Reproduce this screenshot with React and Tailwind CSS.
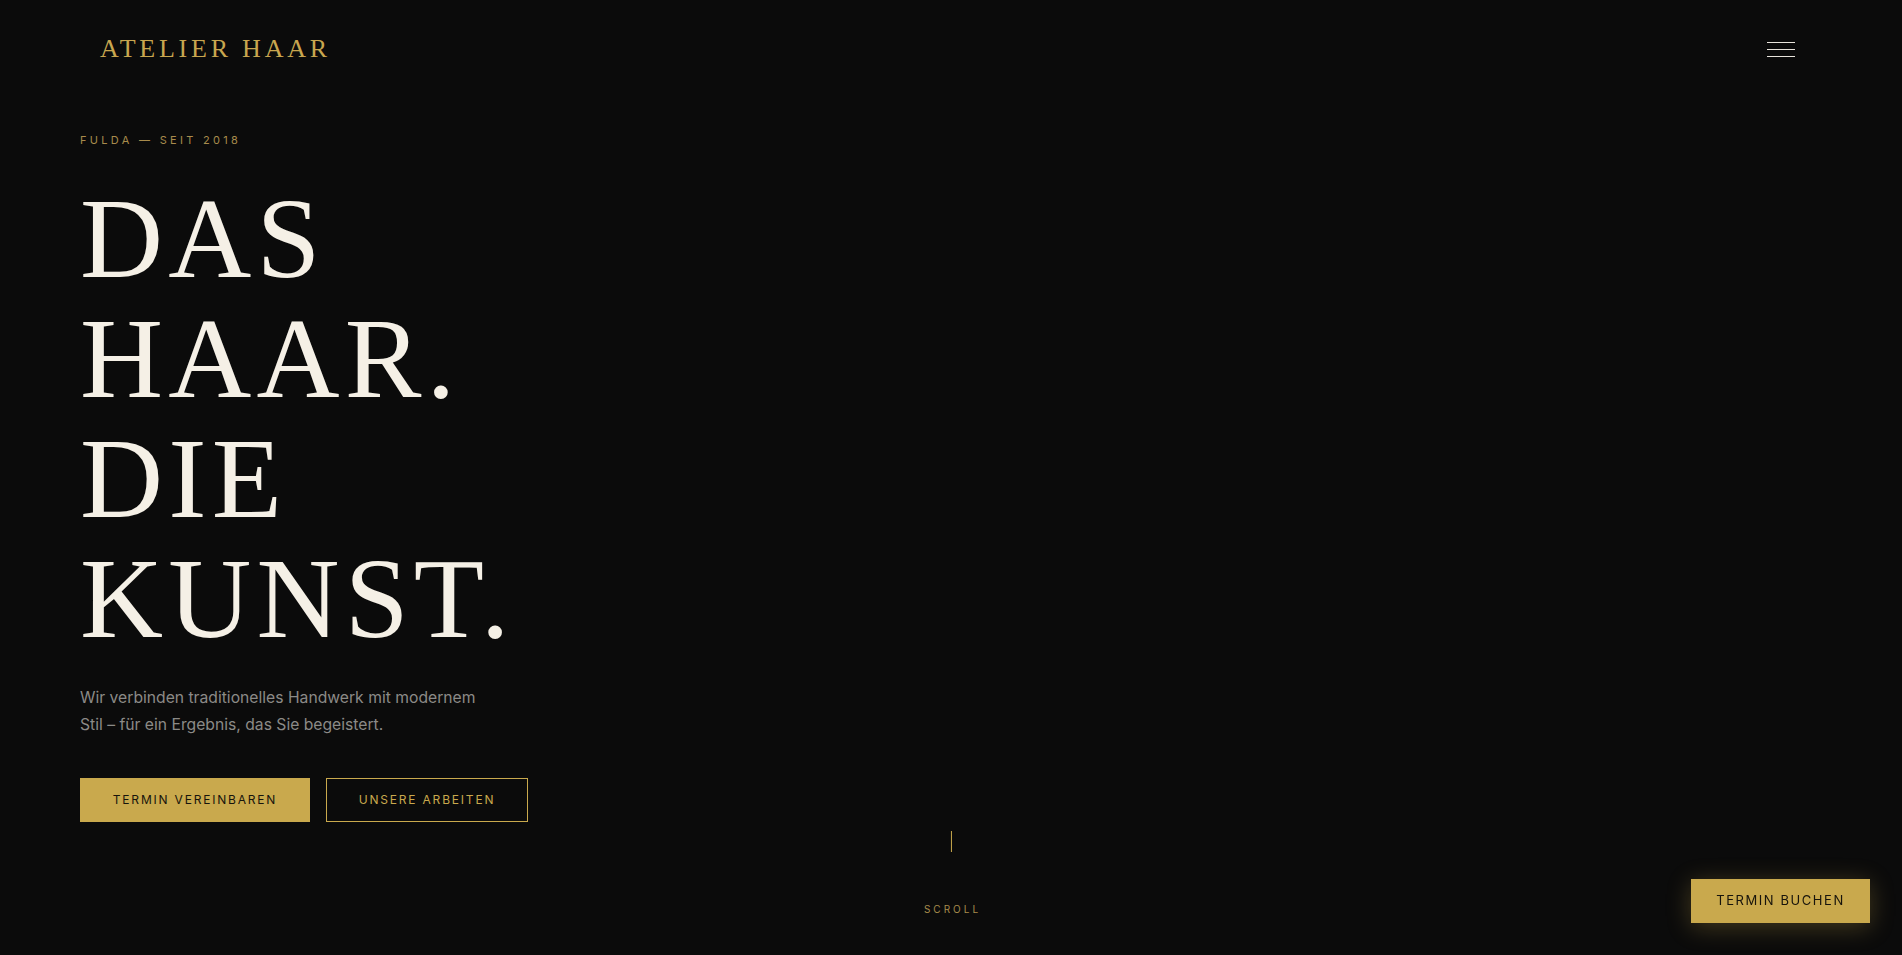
import React from "react";

const serif = { fontFamily: '"Liberation Serif", "Times New Roman", serif' };

export default function App() {
  return (
    <div className="relative min-h-screen bg-[#0b0b0b] text-[#f3eee4] font-['Inter',sans-serif]">
      <header className="flex h-[98px] items-center justify-between pl-[100px] pr-[107px]">
        <div
          className="text-[26px] leading-none tracking-[0.145em] text-[#c8a64f]"
          style={serif}
        >
          ATELIER HAAR
        </div>
        <button className="flex w-[28px] flex-col gap-[6px]" aria-label="Menü">
          <span className="block h-[1px] w-[28px] bg-[#e8e4dc]" />
          <span className="block h-[1px] w-[28px] bg-[#e8e4dc]" />
          <span className="block h-[1px] w-[28px] bg-[#e8e4dc]" />
        </button>
      </header>

      <section className="flex flex-col px-[80px] pt-[34px]">
        <p className="text-[11px] leading-4 tracking-[0.3em] text-[#a88b4c]">
          FULDA — SEIT 2018
        </p>
        <h1
          className="mt-[31px] text-[115px] font-normal leading-[120px] tracking-[0.045em] text-[#f5f0e6]"
          style={serif}
        >
          DAS
          <br />
          HAAR.
          <br />
          DIE
          <br />
          KUNST.
        </h1>
        <p className="mt-[25px] max-w-[420px] text-[15.7px] leading-[27px] text-[#8b8a87]">
          Wir verbinden traditionelles Handwerk mit modernem Stil – für ein Ergebnis, das Sie begeistert.
        </p>
        <div className="mt-[40px] flex gap-4">
          <a className="flex h-[44px] w-[230px] items-center justify-center bg-[#c9a94d] text-[12px] tracking-[0.15em] text-[#17140c]">
            TERMIN VEREINBAREN
          </a>
          <a className="flex h-[44px] w-[202px] items-center justify-center border border-[#c9a94d] text-[12px] tracking-[0.15em] text-[#c9a94d]">
            UNSERE ARBEITEN
          </a>
        </div>
      </section>

      <div className="absolute left-1/2 top-[831px] flex -translate-x-1/2 flex-col items-center">
        <span className="block h-[21px] w-[1px] bg-[#c9a94d]" />
        <span className="mt-[51px] pl-[0.3em] text-[10px] leading-3 tracking-[0.3em] text-[#a88b4c]">
          SCROLL
        </span>
      </div>

      <a className="fixed bottom-8 right-8 flex h-[44px] w-[179px] items-center justify-center bg-[#c9a94d] text-[13px] tracking-[0.12em] text-[#17140c] shadow-[0_4px_24px_rgba(201,169,77,0.3)]">
        TERMIN BUCHEN
      </a>
    </div>
  );
}
